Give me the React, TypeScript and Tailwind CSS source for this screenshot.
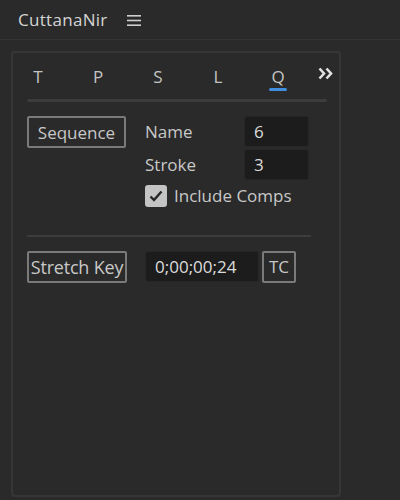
const tabs = ["T", "P", "S", "L", "Q"];

const Btn = ({ label, className = "" }: { label: string; className?: string }) => (
  <button
    type="button"
    className={`h-[32px] border-2 border-[#7a7a7a] rounded-[2px] text-[#c8c8c8] text-[17px] leading-none flex items-center justify-center whitespace-nowrap ${className}`}
  >
    {label}
  </button>
);

const Field = ({ value, className = "" }: { value: string; className?: string }) => (
  <div
    className={`h-[31px] bg-[#1c1c1c] rounded-[3px] border border-[#262626] text-[#dcdcdc] text-[17px] flex items-center px-[9px] ${className}`}
  >
    {value}
  </div>
);

const App = () => {
  return (
    <div
      className="w-[400px] h-[500px] bg-[#2a2a2a] overflow-hidden flex flex-col"
      style={{ fontFamily: '"Open Sans", "Noto Sans", sans-serif' }}
    >
      <div className="h-[40px] flex items-center pl-[18px] gap-[19px] border-b border-[#353535]">
        <span className="text-[#d4d4d4] text-[17px] tracking-[0.3px]">CuttanaNir</span>
        <svg width="14" height="11" viewBox="0 0 14 11" className="mt-[1px]">
          <rect x="0" y="0" width="14" height="1.6" fill="#cfcfcf" />
          <rect x="0" y="4.7" width="14" height="1.6" fill="#cfcfcf" />
          <rect x="0" y="9.4" width="14" height="1.6" fill="#cfcfcf" />
        </svg>
      </div>

      <div className="ml-[11px] mt-[11px] w-[330px] flex-1 mb-[3px] border-2 border-[#363636] rounded-[4px] px-[14px]">
        <div className="h-[46px] flex items-center gap-[40px] relative pl-[1px]">
          {tabs.map((t) => (
            <div key={t} className="w-[20px] flex flex-col items-center relative top-[0px]">
              <span className="text-[#c4c4c4] text-[17px] leading-none">{t}</span>
              {t === "Q" && (
                <div className="absolute top-[20px] w-[18px] h-[3px] bg-[#3f8ee0] rounded-full" />
              )}
            </div>
          ))}
          <svg width="16" height="13" viewBox="0 0 16 13" className="absolute left-[291px] top-[14px]">
            <path d="M1.5 1.5 L6 6.5 L1.5 11.5" stroke="#e2e2e2" strokeWidth="2.6" fill="none" />
            <path d="M8.5 1.5 L13 6.5 L8.5 11.5" stroke="#e2e2e2" strokeWidth="2.6" fill="none" />
          </svg>
        </div>
        <div className="h-[3px] bg-[#3c3c3c] w-[300px] rounded-full" />

        <div className="flex mt-[14px]">
          <Btn label="Sequence" className="w-[99px]" />
          <div className="ml-[19px] flex flex-col">
            <div className="flex items-center">
              <span className="w-[99px] text-[#c8c8c8] text-[17px]">Name</span>
              <Field value="6" className="w-[65px]" />
            </div>
            <div className="flex items-center mt-[2px]">
              <span className="w-[99px] text-[#c8c8c8] text-[17px]">Stroke</span>
              <Field value="3" className="w-[65px]" />
            </div>
            <div className="flex items-center mt-[3px] gap-[7px]">
              <div className="w-[22px] h-[22px] bg-[#c4c4c4] rounded-[3px] flex items-center justify-center">
                <svg width="14" height="12" viewBox="0 0 14 12">
                  <path d="M1.5 6.5 L5 10 L12.5 1.5" stroke="#262626" strokeWidth="2.4" fill="none" />
                </svg>
              </div>
              <span className="text-[#c8c8c8] text-[17px]">Include Comps</span>
            </div>
          </div>
        </div>

        <div className="h-[2px] bg-[#3c3c3c] w-[284px] mt-[26px]" />

        <div className="flex items-center mt-[14px]">
          <Btn label="Stretch Key" className="w-[100px] text-[18px] tracking-[-0.2px]" />
          <Field value="0;00;00;24" className="w-[114px] ml-[18px]" />
          <Btn label="TC" className="w-[34px] ml-[3px]" />
        </div>
      </div>
    </div>
  );
};

export default App;
